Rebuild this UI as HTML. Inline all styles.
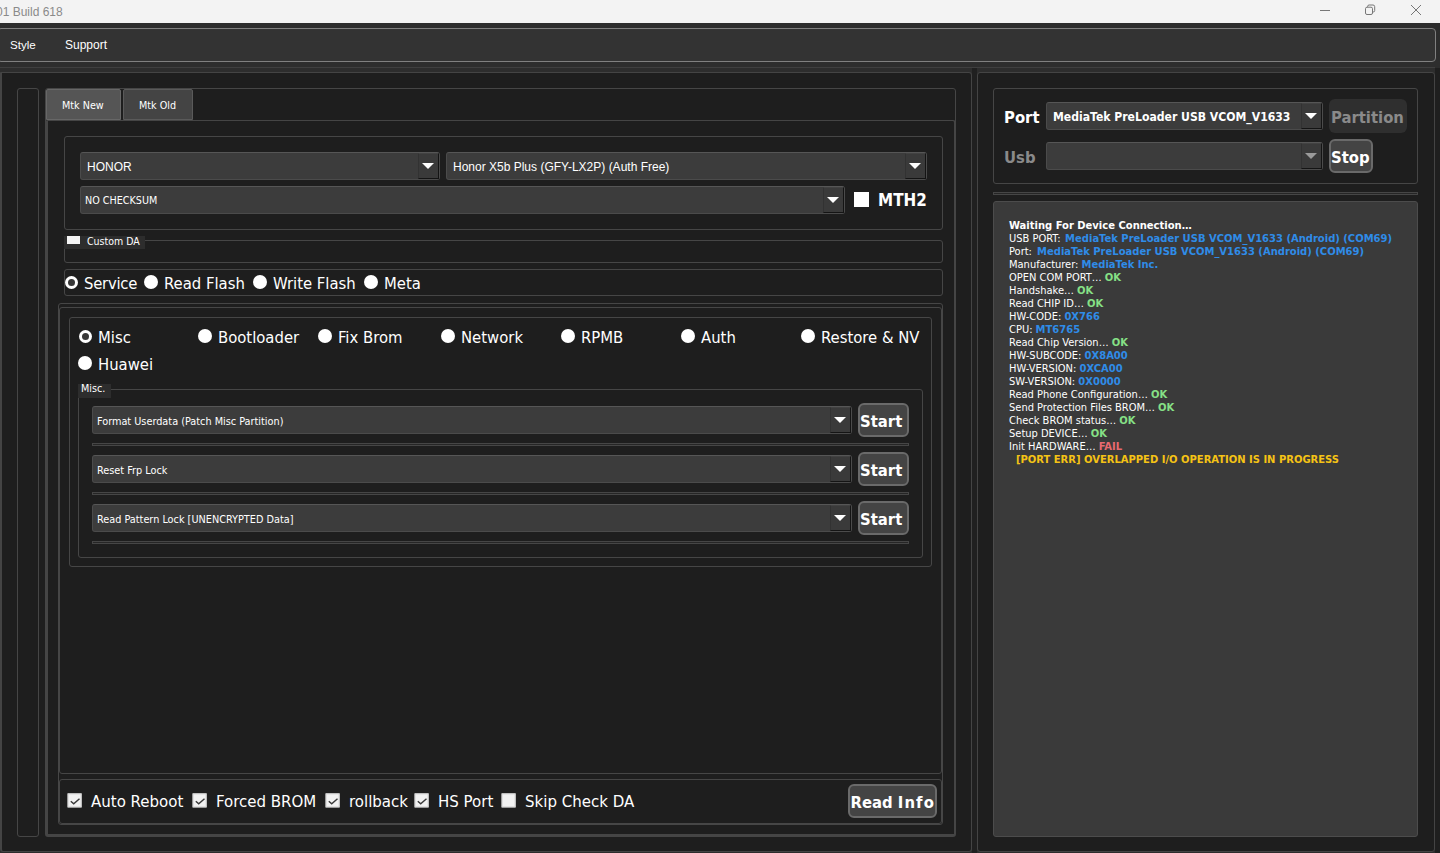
<!DOCTYPE html>
<html><head><meta charset="utf-8"><title>Build 618</title>
<style>
*{box-sizing:border-box;margin:0;padding:0}
html,body{width:1440px;height:853px;overflow:hidden;background:#2d2d2d}
body{position:relative;font-family:"DejaVu Sans Condensed","DejaVu Sans","Liberation Sans",sans-serif;color:#fff}
.a{position:absolute}
.t{position:absolute;white-space:pre;line-height:1}
.ar{font-family:"Liberation Sans",sans-serif}
.fr{position:absolute;border:1px solid #464646;border-radius:3px}
.cb{position:absolute;background:#3c3c3c;border:1px solid #4b4b4b;border-top-color:#565656;border-radius:3px;height:28px}
.cb .btn{position:absolute;right:0;top:0;bottom:0;width:21px;background:#3a3a3a;border-left:1px solid #323232;border-top:1px solid #424242;border-right:1px solid #141414;border-bottom:1.5px solid #141414}
.cb .btn:after{content:"";position:absolute;left:2.5px;top:8.5px;border-left:6px solid transparent;border-right:6px solid transparent;border-top:6.5px solid #fff}
.cb.dis .btn:after{border-top-color:#9a9a9a}
.bt{position:absolute;background:#444;border:2px solid #6a6a6a;border-radius:6px;font-weight:bold;font-size:16.5px}
.rd{position:absolute;width:14px;height:14px;border-radius:50%;background:#fff}
.rd.on{width:13px;height:13px;margin:.5px 0 0 .5px}.rd.on:after{content:"";position:absolute;left:3px;top:3px;width:7px;height:7px;border-radius:50%;background:#383838}
.ck{position:absolute;width:14px;height:14px;background:#f2f2f2;border:1px solid #d4d4d4;transform:translate(-.4px,-.6px)}
.big{font-size:16.5px}
.sm{font-size:10.7px}
.sep{position:absolute;height:3px;border:1px solid #464646;background:#262626}
.log{position:absolute;left:1009px;font-size:11px;line-height:13px;white-space:pre}
.log b{font-weight:bold;font-size:11.1px}
.bl{color:#2f8ce8}.gr{color:#86e086}.rdc{color:#e86a70}.yl{color:#f5c315}
</style></head><body>
<!-- title bar -->
<div class="a" style="left:0;top:0;width:1440px;height:23px;background:#f3f3f3"></div>
<div class="t ar" style="left:-4px;top:6px;font-size:12px;color:#8a8a8a">01 Build 618</div>
<svg class="a" style="left:1310px;top:0" width="130" height="23" viewBox="0 0 130 23" fill="none" stroke="#777" stroke-width="1">
<path d="M10 10.5h10"/>
<rect x="55.5" y="7.2" width="7" height="7.3" rx="1.5"/><path d="M57.6 7.2v-.7a1.5 1.5 0 0 1 1.5-1.5h3.9a1.7 1.7 0 0 1 1.7 1.7v3.8a1.5 1.5 0 0 1-1.5 1.5h-.7"/>
<path d="M101 5l10 10M111 5l-10 10"/>
</svg>
<!-- menu bar -->
<div class="a" style="left:-3px;top:28px;width:1439px;height:34px;background:#333;border:1px solid #808080;border-radius:4px"></div>
<div class="t ar" style="left:10px;top:39px;font-size:11.6px">Style</div>
<div class="t ar" style="left:65px;top:39px;font-size:12px">Support</div>
<!-- outer frame -->
<div class="a" style="left:0;top:67px;width:1435px;height:1px;background:#3f3f3f"></div>
<div class="a" style="left:1435px;top:68px;width:5px;height:785px;background:#1f1f1f"></div>
<div class="a" style="left:972px;top:68px;width:5px;height:785px;background:#202020"></div>
<!-- left pane -->
<div class="a" style="left:0;top:72px;width:972px;height:780px;background:#1e1e1e;border:1px solid #444;border-left-width:2px;border-radius:1px 3px 3px 3px"></div>
<!-- right pane -->
<div class="a" style="left:977px;top:72px;width:458px;height:780px;background:#1e1e1e;border:1px solid #444;border-radius:3px"></div>

<!-- narrow frame -->
<div class="fr" style="left:17px;top:88px;width:22px;height:749px"></div>
<!-- tab bar frame -->
<div class="fr" style="left:45px;top:88px;width:911px;height:40px"></div>
<!-- tab pane -->
<div class="a" style="left:45px;top:120px;width:911px;height:717px;background:#1e1e1e;border:3px solid #454545;border-top-width:1px;border-right-width:2px;border-radius:3px"></div>
<!-- tabs -->
<div class="a" style="left:46px;top:89px;width:75px;height:31px;background:#555;border:1px solid #676767;border-radius:2px 2px 0 0"></div>
<div class="a" style="left:123px;top:89px;width:70px;height:31px;background:#444;border:1px solid #5a5a5a;border-radius:2px 2px 0 0"></div>
<div class="t sm" style="left:62px;top:101px">Mtk New</div>
<div class="t sm" style="left:139px;top:101px">Mtk Old</div>
<!-- group 1 -->
<div class="fr" style="left:64px;top:136px;width:879px;height:94px"></div>
<div class="cb" style="left:80px;top:152px;width:360px"><div class="btn"></div></div>
<div class="t ar" style="left:87px;top:161px;font-size:12px">HONOR</div>
<div class="cb" style="left:446px;top:152px;width:481px"><div class="btn"></div></div>
<div class="t ar" style="left:453px;top:161px;font-size:12px">Honor X5b Plus (GFY-LX2P) (Auth Free)</div>
<div class="cb" style="left:80px;top:186px;width:765px"><div class="btn"></div></div>
<div class="t sm" style="left:85px;top:196px;font-size:10.7px">NO CHECKSUM</div>
<div class="a" style="left:854px;top:192px;width:15px;height:15px;background:#fff"></div>
<div class="t" style="left:878px;top:192px;font-size:16.9px;font-weight:bold">MTH2</div>
<!-- custom DA -->
<div class="fr" style="left:64px;top:240px;width:879px;height:23px"></div>
<div class="a" style="left:64px;top:236px;width:81px;height:13px;background:#2d2d2d"></div>
<div class="a" style="left:67px;top:236px;width:13px;height:8px;background:#f4f4f4"></div>
<div class="t sm" style="left:87px;top:236px;font-size:10.5px">Custom DA</div>
<!-- service radios -->
<div class="fr" style="left:64px;top:269px;width:879px;height:27px"></div>
<div class="rd on" style="left:64px;top:275px"></div><div class="t big" style="left:84px;top:276px;letter-spacing:-.25px">Service</div>
<div class="rd" style="left:144px;top:275px"></div><div class="t big" style="left:164px;top:276px">Read Flash</div>
<div class="rd" style="left:253px;top:275px"></div><div class="t big" style="left:273px;top:276px">Write Flash</div>
<div class="rd" style="left:364px;top:275px"></div><div class="t big" style="left:384px;top:276px">Meta</div>
<!-- stacked frames -->
<div class="fr" style="left:58px;top:303px;width:885px;height:522px"></div>
<div class="fr" style="left:59px;top:307px;width:883px;height:467px"></div>
<!-- radio group -->
<div class="fr" style="left:69px;top:317px;width:863px;height:250px"></div>
<div class="rd on" style="left:78px;top:329px"></div><div class="t big" style="left:98px;top:330px">Misc</div>
<div class="rd" style="left:198px;top:329px"></div><div class="t big" style="left:218px;top:330px">Bootloader</div>
<div class="rd" style="left:318px;top:329px"></div><div class="t big" style="left:338px;top:330px">Fix Brom</div>
<div class="rd" style="left:441px;top:329px"></div><div class="t big" style="left:461px;top:330px">Network</div>
<div class="rd" style="left:561px;top:329px"></div><div class="t big" style="left:581px;top:330px">RPMB</div>
<div class="rd" style="left:681px;top:329px"></div><div class="t big" style="left:701px;top:330px">Auth</div>
<div class="rd" style="left:801px;top:329px"></div><div class="t big" style="left:821px;top:330px">Restore &amp; NV</div>
<div class="rd" style="left:78px;top:356px"></div><div class="t big" style="left:98px;top:357px">Huawei</div>
<!-- misc group -->
<div class="fr" style="left:78px;top:389px;width:845px;height:169px"></div>
<div class="a" style="left:78px;top:384px;width:33px;height:14px;background:#2d2d2d"></div>
<div class="t sm" style="left:81px;top:384px">Misc.</div>
<div class="cb" style="left:92px;top:406px;width:760px"><div class="btn"></div></div>
<div class="t sm" style="left:97px;top:417px;font-size:10.8px">Format Userdata (Patch Misc Partition)</div>
<div class="bt" style="left:858px;top:403px;width:51px;height:34px"></div><div class="t big" style="left:860px;top:414px;font-weight:bold">Start</div>
<div class="sep" style="left:92px;top:443px;width:817px"></div>
<div class="cb" style="left:92px;top:455px;width:760px"><div class="btn"></div></div>
<div class="t sm" style="left:97px;top:466px;font-size:10.8px">Reset Frp Lock</div>
<div class="bt" style="left:858px;top:452px;width:51px;height:34px"></div><div class="t big" style="left:860px;top:463px;font-weight:bold">Start</div>
<div class="sep" style="left:92px;top:492px;width:817px"></div>
<div class="cb" style="left:92px;top:504px;width:760px"><div class="btn"></div></div>
<div class="t sm" style="left:97px;top:515px;font-size:10.8px">Read Pattern Lock [UNENCRYPTED Data]</div>
<div class="bt" style="left:858px;top:501px;width:51px;height:34px"></div><div class="t big" style="left:860px;top:512px;font-weight:bold">Start</div>
<div class="sep" style="left:92px;top:541px;width:817px"></div>
<!-- bottom checkbox group -->
<div class="fr" style="left:59px;top:779px;width:883px;height:45px"></div>
<div class="ck" style="left:68px;top:794px"><svg width="12" height="12" viewBox="0 0 12 12" style="position:absolute;left:0;top:0"><path d="M2.2 6.9l2.9 2.5L10.9 4.4" fill="none" stroke="#3a3a3a" stroke-width="1.45"/></svg></div><div class="t big" style="left:91px;top:793px;font-size:16.7px">Auto Reboot</div>
<div class="ck" style="left:193px;top:794px"><svg width="12" height="12" viewBox="0 0 12 12" style="position:absolute;left:0;top:0"><path d="M2.2 6.9l2.9 2.5L10.9 4.4" fill="none" stroke="#3a3a3a" stroke-width="1.45"/></svg></div><div class="t big" style="left:216px;top:793px;font-size:16.7px">Forced BROM</div>
<div class="ck" style="left:326px;top:794px"><svg width="12" height="12" viewBox="0 0 12 12" style="position:absolute;left:0;top:0"><path d="M2.2 6.9l2.9 2.5L10.9 4.4" fill="none" stroke="#3a3a3a" stroke-width="1.45"/></svg></div><div class="t big" style="left:349px;top:793px;font-size:16.7px">rollback</div>
<div class="ck" style="left:415px;top:794px"><svg width="12" height="12" viewBox="0 0 12 12" style="position:absolute;left:0;top:0"><path d="M2.2 6.9l2.9 2.5L10.9 4.4" fill="none" stroke="#3a3a3a" stroke-width="1.45"/></svg></div><div class="t big" style="left:438px;top:793px;font-size:16.7px">HS Port</div>
<div class="ck" style="left:502px;top:794px"></div><div class="t big" style="left:525px;top:793px;font-size:16.7px">Skip Check DA</div>
<div class="bt" style="left:848px;top:784px;width:89px;height:34px"></div><div class="t big" style="left:850.5px;top:794.5px;font-weight:bold">Read <span style="letter-spacing:1.1px">Info</span></div>

<!-- port group -->
<div class="fr" style="left:993px;top:88px;width:425px;height:96px"></div>
<div class="t" style="left:1004px;top:110px;font-size:16.5px;font-weight:bold">Port</div>
<div class="cb" style="left:1046px;top:102px;width:277px;height:28px"><div class="btn"></div></div>
<div class="t" style="left:1053px;top:111px;font-size:12.1px;font-weight:bold">MediaTek PreLoader USB VCOM_V1633</div>
<div class="a" style="left:1329px;top:99px;width:78px;height:34px;background:#2f2f2f;border-radius:6px"></div>
<div class="t" style="left:1331px;top:110px;font-size:16.5px;font-weight:bold;color:#8a8a8a">Partition</div>
<div class="t" style="left:1004px;top:150px;font-size:16.5px;font-weight:bold;color:#8a8a8a">Usb</div>
<div class="cb dis" style="left:1046px;top:142px;width:277px;height:28px"><div class="btn"></div></div>
<div class="bt" style="left:1329px;top:139px;width:44px;height:34px"></div><div class="t big" style="left:1331px;top:150px;font-weight:bold">Stop</div>
<div class="sep" style="left:993px;top:192px;width:425px"></div>
<!-- log -->
<div class="a" style="left:993px;top:201px;width:425px;height:636px;background:#3a3a3a;border:1px solid #4c4c4c;border-radius:3px"></div>
<div class="log" style="top:219px"><b>Waiting For Device Connection…</b>
USB PORT: <b class="bl" style="margin-left:1.5px">MediaTek PreLoader USB VCOM_V1633 (Android) (COM69)</b>
Port: <b class="bl" style="margin-left:2px">MediaTek PreLoader USB VCOM_V1633 (Android) (COM69)</b>
Manufacturer: <b class="bl">MediaTek Inc.</b>
OPEN COM PORT… <b class="gr">OK</b>
Handshake… <b class="gr">OK</b>
Read CHIP ID… <b class="gr">OK</b>
HW-CODE: <b class="bl">0X766</b>
CPU: <b class="bl">MT6765</b>
Read Chip Version… <b class="gr">OK</b>
HW-SUBCODE: <b class="bl">0X8A00</b>
HW-VERSION: <b class="bl">0XCA00</b>
SW-VERSION: <b class="bl">0X0000</b>
Read Phone Configuration… <b class="gr">OK</b>
Send Protection Files BROM… <b class="gr">OK</b>
Check BROM status… <b class="gr">OK</b>
Setup DEVICE… <b class="gr">OK</b>
Init HARDWARE… <b class="rdc">FAIL</b>
<b class="yl">  [PORT ERR] OVERLAPPED I/O OPERATION IS IN PROGRESS</b></div>
</body></html>
